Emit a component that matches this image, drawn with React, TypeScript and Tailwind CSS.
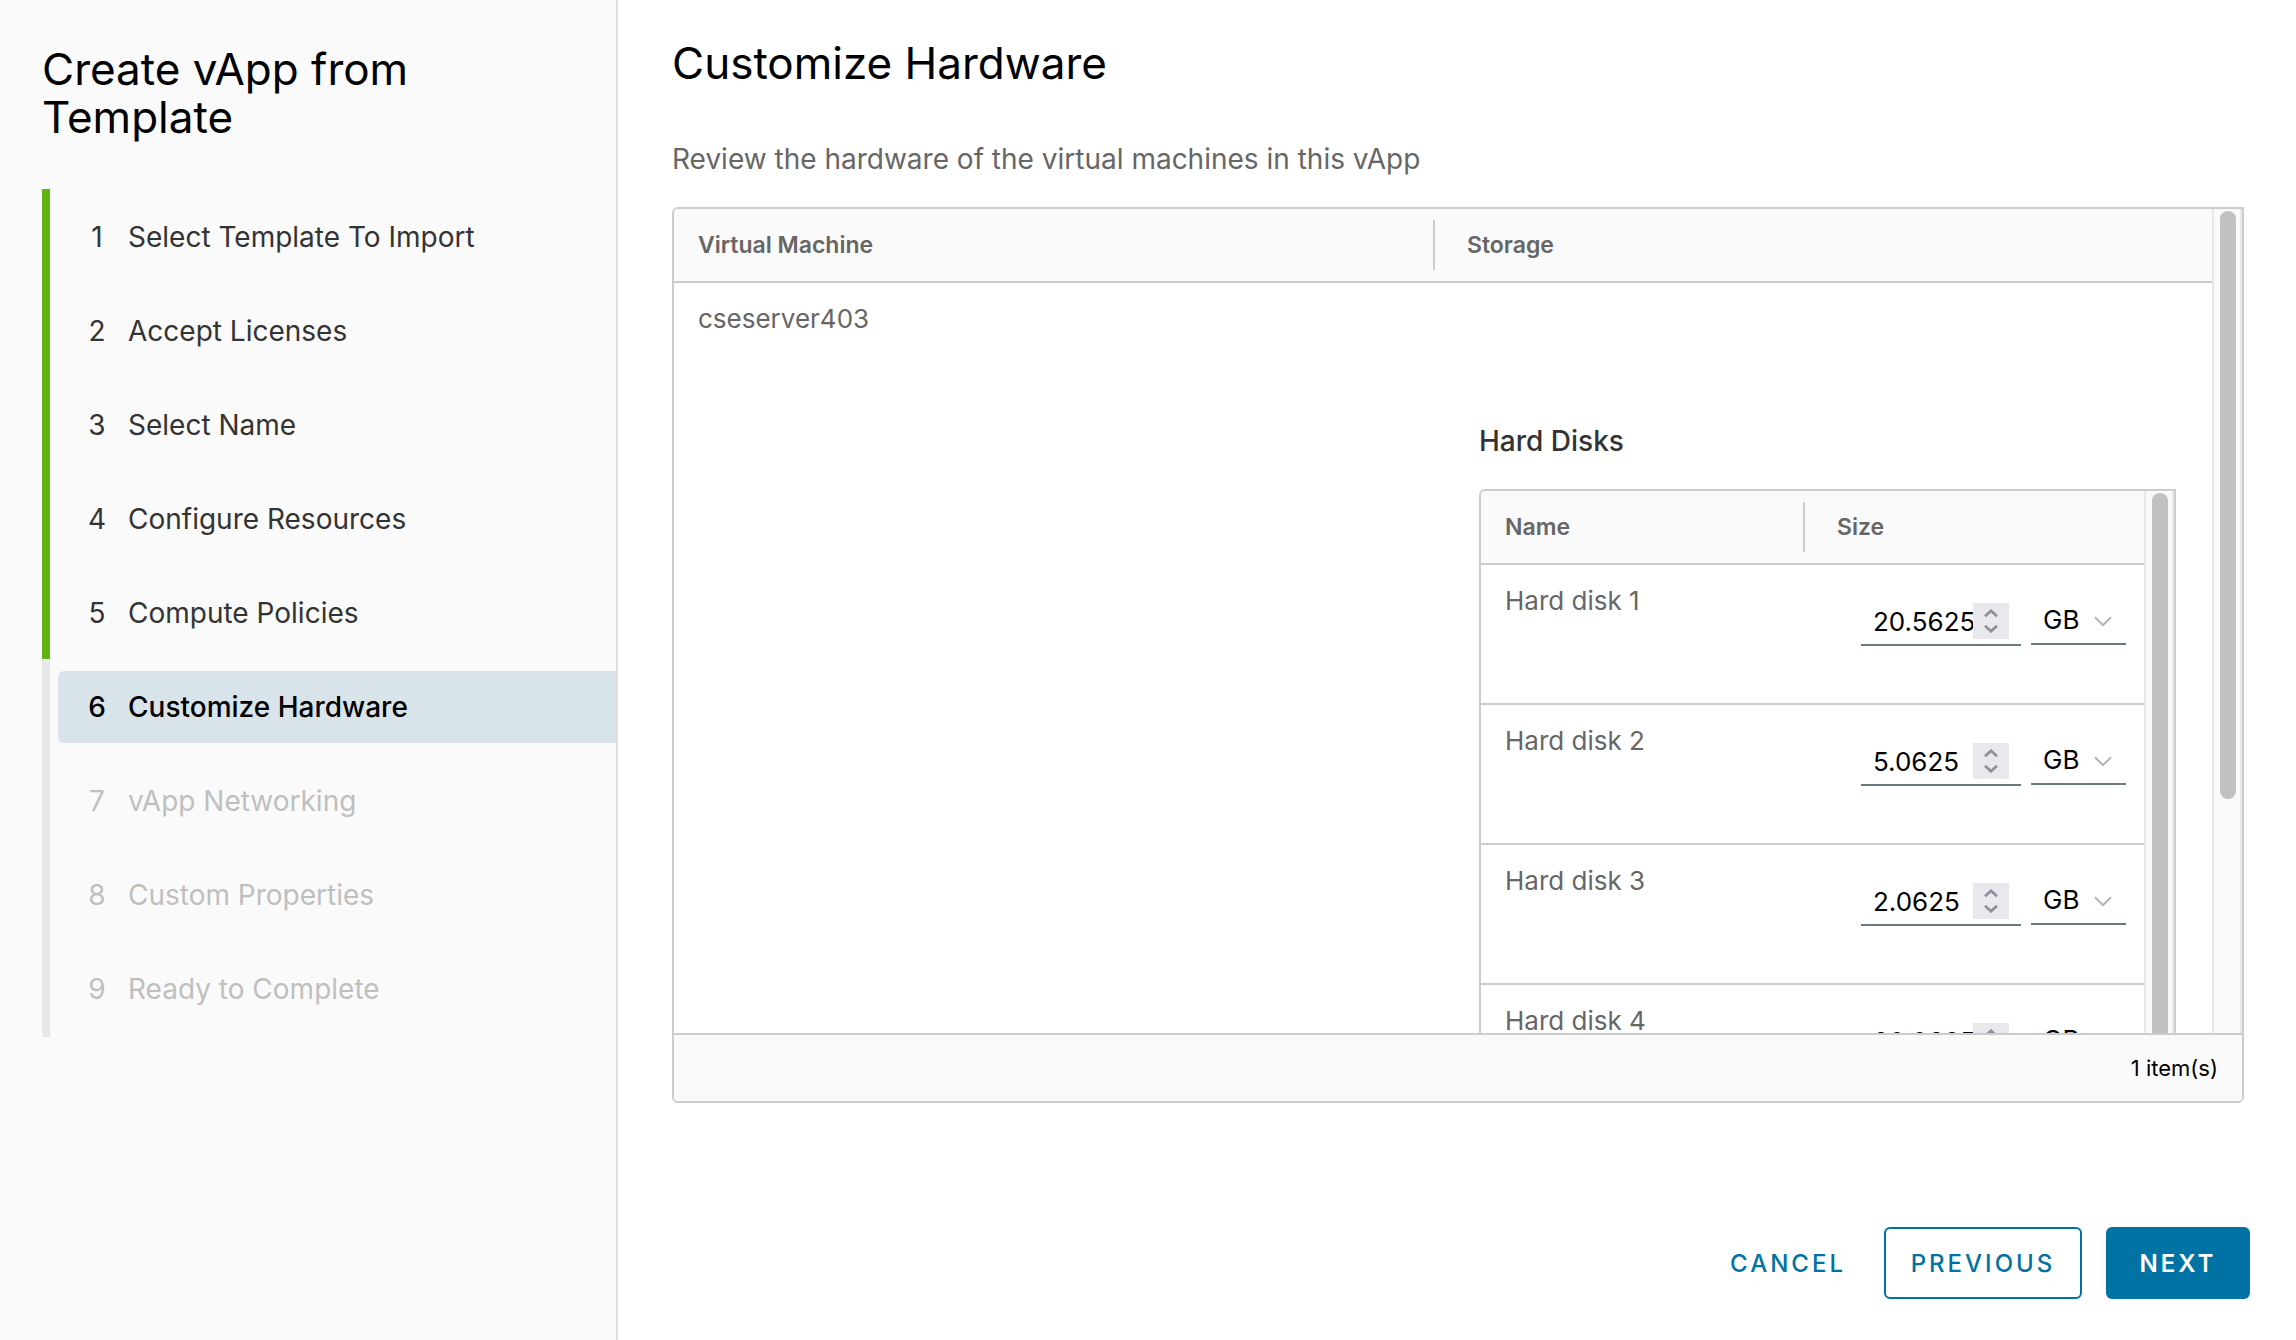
import React from "react";

const steps = [
  "Select Template To Import",
  "Accept Licenses",
  "Select Name",
  "Configure Resources",
  "Compute Policies",
  "Customize Hardware",
  "vApp Networking",
  "Custom Properties",
  "Ready to Complete",
];
const current = 5;

const disks = [
  { name: "Hard disk 1", size: "20.5625" },
  { name: "Hard disk 2", size: "5.0625" },
  { name: "Hard disk 3", size: "2.0625" },
  { name: "Hard disk 4", size: "20.0625" },
];

function Step({ index, label }: { index: number; label: string }) {
  const done = index < current;
  const active = index === current;
  const tone = active
    ? "bg-[#d9e4ea] font-medium text-black"
    : done
      ? "text-[#333333]"
      : "text-[#bfbfbf]";
  return (
    <li
      className={`border-l-8 pt-3 pb-2.5 pl-2 last:pb-3 ${done ? "border-[#60b515]" : "border-[#e8e8e8]"}`}
    >
      <button
        type="button"
        disabled={!done && !active}
        aria-current={active ? "step" : undefined}
        className={`flex h-[72px] w-full items-center rounded-l-md text-left text-[28px] leading-9 ${tone}`}
      >
        <span className="mr-[19px] ml-[27px] w-6 text-center">{index + 1}</span>
        <span>{label}</span>
      </button>
    </li>
  );
}

function SizeField({ name, size }: { name: string; size: string }) {
  return (
    <div className="flex items-start justify-end gap-2.5">
      <div className="flex h-[50px] w-40 items-start border-b-2 border-[#6a7a81] pt-[7px] pr-3 pl-3">
        <input
          type="text"
          inputMode="decimal"
          aria-label={`${name} size`}
          defaultValue={size}
          className="h-9 w-[100px] min-w-0 bg-transparent text-[26px] text-black outline-none"
        />
        <span className="flex h-9 w-9 shrink-0 flex-col items-center justify-center gap-2 bg-[#e9e8ed]">
          <button type="button" aria-label={`Increase ${name} size`}>
            <svg width="14" height="8" viewBox="0 0 14 8" className="block" fill="none" stroke="#8f8f9d" strokeWidth="2.8">
              <path d="M1 7.2 7 1.8l6 5.4" />
            </svg>
          </button>
          <button type="button" aria-label={`Decrease ${name} size`}>
            <svg width="14" height="8" viewBox="0 0 14 8" className="block" fill="none" stroke="#8f8f9d" strokeWidth="2.8">
              <path d="M1 .8 7 6.2l6-5.4" />
            </svg>
          </button>
        </span>
      </div>
      <div className="relative">
        <select
          aria-label={`${name} unit`}
          className="block h-[49px] w-[95px] appearance-none border-b-2 border-[#6a7a81] bg-transparent pl-3 text-[26px] text-black outline-none"
        >
          <option>GB</option>
          <option>MB</option>
        </select>
        <svg
          width="18"
          height="11"
          viewBox="0 0 18 11"
          className="pointer-events-none absolute top-5 right-3.5"
          fill="none"
          stroke="#b3b3b3"
          strokeWidth="2"
        >
          <path d="M1 1.2 9 9.2l8-8" />
        </svg>
      </div>
    </div>
  );
}

function ScrollTrack({ thumb }: { thumb: string }) {
  return (
    <div className="w-[30px] shrink-0 border-x-2 border-[#e8e8e8] bg-[#fafafa] pt-0.5 pl-1.5">
      <div className={`w-4 rounded-full bg-[#c1c1c1] ${thumb}`} />
    </div>
  );
}

function HeadCell({ children, divided }: { children: React.ReactNode; divided?: boolean }) {
  return (
    <th scope="col" className="h-[74px] border-b-2 border-[#cccccc] bg-[#fafafa] p-0 text-left align-middle">
      <div
        className={`flex h-[50px] items-center text-[23px] leading-6 font-semibold text-[#666666] ${divided ? "border-l-2 border-[#cccccc] pl-8" : "pl-6"}`}
      >
        {children}
      </div>
    </th>
  );
}

function DiskTable() {
  return (
    <div className="flex h-[700px] rounded-tl-md border-2 border-[#cccccc]">
      <div className="min-w-0 flex-1 overflow-hidden rounded-tl">
        <table className="w-full table-fixed border-separate border-spacing-0">
          <colgroup>
            <col className="w-[322px]" />
            <col />
          </colgroup>
          <thead>
            <tr>
              <HeadCell>Name</HeadCell>
              <HeadCell divided>Size</HeadCell>
            </tr>
          </thead>
          <tbody>
            {disks.map((d) => (
              <tr key={d.name}>
                <td className="h-[140px] border-b-2 border-[#cccccc] pt-6 pl-6 align-top text-[26px] leading-6 text-[#666666]">
                  {d.name}
                </td>
                <td className="h-[140px] border-b-2 border-[#cccccc] pt-[31px] pr-[18px] align-top">
                  <SizeField name={d.name} size={d.size} />
                </td>
              </tr>
            ))}
          </tbody>
        </table>
      </div>
      <ScrollTrack thumb="h-[640px]" />
    </div>
  );
}

export default function App() {
  return (
    <div className="flex min-h-screen bg-white font-['Inter',sans-serif] text-black">
      <aside className="w-[618px] shrink-0 border-r-2 border-[#dfdfdf] bg-[#fafafa] pt-[45px] pl-[42px]">
        <h1 className="w-[420px] text-[44px] leading-[48px]">Create vApp from Template</h1>
        <ol className="mt-12">
          {steps.map((label, i) => (
            <Step key={label} index={i} label={label} />
          ))}
        </ol>
      </aside>
      <main className="flex min-w-0 flex-1 flex-col pt-[39px] pb-[41px] pl-[54px]">
        <h2 className="text-[44px] leading-[48px]">Customize Hardware</h2>
        <p className="mt-[54px] text-[28px] leading-9 text-[#666666]">
          Review the hardware of the virtual machines in this vApp
        </p>
        <section className="mt-[30px] mr-[52px] overflow-hidden rounded-md rounded-tr-none border-2 border-[#cccccc]">
          <div className="flex h-[824px]">
            <div className="min-w-0 flex-1 overflow-hidden">
              <table className="w-full table-fixed border-separate border-spacing-0">
                <colgroup>
                  <col className="w-[49.35%]" />
                  <col />
                </colgroup>
                <thead>
                  <tr>
                    <HeadCell>Virtual Machine</HeadCell>
                    <HeadCell divided>Storage</HeadCell>
                  </tr>
                </thead>
                <tbody>
                  <tr>
                    <td className="pt-[18px] pl-6 align-top text-[26px] leading-9 text-[#666666]">cseserver403</td>
                    <td className="pt-[140px] pr-9 pl-[46px] align-top">
                      <h3 className="mb-[30px] text-[28px] leading-9 font-medium text-[#333333]">Hard Disks</h3>
                      <DiskTable />
                    </td>
                  </tr>
                </tbody>
              </table>
            </div>
            <ScrollTrack thumb="h-[588px]" />
          </div>
          <footer className="flex h-[68px] items-center justify-end border-t-2 border-[#cccccc] bg-[#fafafa] pr-6 text-[22px]">
            1 item(s)
          </footer>
        </section>
        <div className="mt-auto mr-[46px] flex justify-end gap-6 text-[24px] font-medium tracking-[3px]">
          <button type="button" className="h-[72px] px-3.5 pt-0.5 text-[#0072a3]">CANCEL</button>
          <button type="button" className="h-[72px] w-[198px] rounded-md border-2 border-[#0072a3] pt-0.5 text-[#0072a3]">
            PREVIOUS
          </button>
          <button type="button" className="h-[72px] w-36 rounded-md bg-[#0072a3] pt-0.5 font-semibold text-white">NEXT</button>
        </div>
      </main>
    </div>
  );
}
